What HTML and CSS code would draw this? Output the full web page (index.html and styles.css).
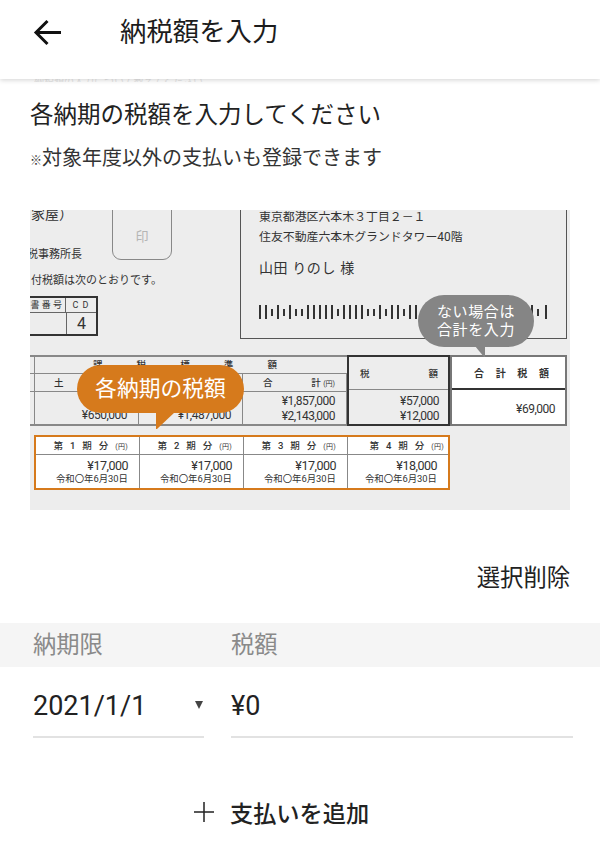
FILE: index.html

```html
<!DOCTYPE html>
<html lang="ja">
<head>
    <meta charset="UTF-8">
    <meta name="viewport" content="width=device-width, initial-scale=1.0">
    <title>納税額を入力</title>
    <link rel="stylesheet" href="styles.css">
</head>
<body>
    <header class="topbar">
        <svg class="back" width="30" height="30" viewBox="0 0 30 30">
            <path d="M29 14.5H4M15.5 3L4 14.5L15.5 26" fill="none" stroke="#111" stroke-width="3"/>
        </svg>
        <h1>納税額を入力</h1>
    </header>
    <div class="ghost"><span>納税額の入力について教えてください</span></div>

    <p class="lead">各納期の税額を入力してください</p>
    <p class="sub"><span class="mark">※</span>対象年度以外の支払いも登録できます</p>

    <div class="doc">
        <div class="small t-house">家屋）</div>
        <div class="seal">印</div>
        <div class="small t-office">税事務所長</div>
        <div class="small t-note">付税額は次のとおりです。</div>
        <div class="cd">
            <div class="cd-head">書 番 号</div>
            <div class="cd-head">C D</div>
            <div></div>
            <div class="cd-num">4</div>
        </div>

        <div class="address">
            <div class="addr-line">東京都港区六本木３丁目２－１</div>
            <div class="addr-line">住友不動産六本木グランドタワー40階</div>
            <div class="addr-name">山田 りのし 様</div>
            <svg class="barcode" width="292" height="14" viewBox="0 0 292 14">
                <path d="M1 0V14M7 0V14M13 4V11M19 0V14M25 4V11M31 0V14M37 4V11M43 4V11M49 0V14M55 0V14M61 0V14M67 0V14M73 0V14M79 4V11M85 0V14M91 0V14M97 0V14M103 0V14M109 4V11M115 4V11M121 0V14M127 4V11M133 0V14M139 0V14M145 4V11M151 0V14M157 0V14M163 4V11M169 0V14M175 4V11M181 0V14M187 0V14M193 0V14M199 4V11M205 0V14M211 4V11M217 0V14M223 0V14M229 4V11M235 0V14M241 0V14M247 4V11M253 0V14M259 0V14M265 4V11M273 0V14M279 4V11M287 0V14" fill="none" stroke="#333" stroke-width="2"/>
            </svg>
        </div>

        <div class="tax">
            <div class="tax-title"><span>課</span><span>税</span><span>標</span><span>準</span><span>額</span></div>
            <div class="tax-cell tax-land">土</div>
            <div class="tax-cell"></div>
            <div class="tax-cell tax-sum"><span>合</span><span>計 <small>(円)</small></span></div>
            <div class="tax-cell tax-val">¥650,000</div>
            <div class="tax-cell tax-val">¥1,487,000</div>
            <div class="tax-cell tax-val">¥1,857,000<br>¥2,143,000</div>
        </div>
        <div class="amount">
            <div class="amount-head"><span>税</span><span>額</span></div>
            <div class="amount-val">¥57,000<br>¥12,000</div>
        </div>
        <div class="total">
            <div class="total-head"><span>合</span><span>計</span><span>税</span><span>額</span></div>
            <div class="total-val">¥69,000</div>
        </div>

        <div class="terms">
            <div class="term">
                <div class="term-head">第 1 期 分 <small>(円)</small></div>
                <div class="term-body">¥17,000<small>令和〇年6月30日</small></div>
            </div>
            <div class="term">
                <div class="term-head">第 2 期 分 <small>(円)</small></div>
                <div class="term-body">¥17,000<small>令和〇年6月30日</small></div>
            </div>
            <div class="term">
                <div class="term-head">第 3 期 分 <small>(円)</small></div>
                <div class="term-body">¥17,000<small>令和〇年6月30日</small></div>
            </div>
            <div class="term term-last">
                <div class="term-head">第 4 期 分 <small>(円)</small></div>
                <div class="term-body">¥18,000<small>令和〇年6月30日</small></div>
            </div>
        </div>

        <div class="bubble bubble-orange">各納期の税額</div>
        <div class="bubble bubble-gray">ない場合は<br>合計を入力</div>
    </div>

    <div class="actions">選択削除</div>

    <div class="band">
        <div class="col-date">納期限</div>
        <div class="col-tax">税額</div>
    </div>
    <div class="row">
        <div class="field field-date">2021/1/1<span class="caret"></span></div>
        <div class="field field-tax">¥0</div>
    </div>

    <div class="add">
        <svg width="20" height="20" viewBox="0 0 20 20">
            <path d="M0 10H20M10 0V20" fill="none" stroke="#222" stroke-width="1.5"/>
        </svg>
        <span>支払いを追加</span>
    </div>
</body>
</html>
```

FILE: styles.css

```css
* {
    box-sizing: border-box;
}
body {
    margin: 0;
    background: white;
    color: #222;
    font-family: Roboto, "Noto Sans CJK JP", sans-serif;
    position: relative;
    height: 853px;
    overflow: hidden;
}
.topbar {
    height: 79px;
    display: flex;
    align-items: flex-start;
    padding: 18px 0 0 32px;
    background: white;
    box-shadow: 0 1px 5px rgba(0, 0, 0, 0.18);
    position: relative;
    z-index: 2;
}
.topbar h1 {
    margin: -2px 0 0 58px;
    font-size: 26.4px;
    line-height: 32px;
    font-weight: 400;
    color: #1c1c1c;
}
.ghost {
    position: absolute;
    top: 79px;
    left: 34px;
    height: 3px;
    overflow: hidden;
    font-size: 10px;
    line-height: 6px;
    color: #e6e6e6;
}
.lead {
    margin: 18px 0 0 30px;
    font-size: 23.5px;
    line-height: 36px;
}
.sub {
    margin: 7px 0 0 30px;
    font-size: 20px;
    line-height: 36px;
    color: #333;
}
.sub .mark {
    font-size: 12px;
    line-height: 0;
}

/* 納付書の図 */
.doc {
    position: relative;
    margin: 34px 30px 0;
    height: 300px;
    background: #ededed;
    overflow: hidden;
    color: #333;
}
.small {
    position: absolute;
    font-size: 11px;
    line-height: 14px;
    white-space: nowrap;
}
.t-house {
    left: 1px;
    top: -3px;
    font-size: 14px;
}
.t-office {
    left: -3px;
    top: 38px;
}
.t-note {
    left: 1px;
    top: 64px;
}
.seal {
    position: absolute;
    left: 82px;
    top: -10px;
    width: 60px;
    height: 60px;
    border: 1.5px solid #888;
    border-radius: 9px;
    color: #b5b5b5;
    font-size: 13px;
    display: flex;
    align-items: center;
    justify-content: center;
    padding-top: 10px;
}
.cd {
    position: absolute;
    left: -2px;
    top: 86px;
    width: 70px;
    height: 40px;
    border: 2px solid #333;
    display: grid;
    grid-template-columns: 36px 1fr;
    grid-template-rows: 15px 1fr;
    background: #ededed;
}
.cd-head {
    font-size: 9px;
    line-height: 15px;
    text-align: center;
    border-bottom: 1px solid #666;
    white-space: nowrap;
    letter-spacing: 1px;
}
.cd-head:first-child {
    border-right: 1px solid #666;
    overflow: hidden;
    text-align: right;
    padding-right: 3px;
    letter-spacing: 0;
}
.cd-num {
    border-left: 1px solid #666;
    font-size: 16px;
    line-height: 21px;
    text-align: center;
}
.address {
    position: absolute;
    left: 210px;
    top: -12px;
    width: 327px;
    height: 141px;
    border: 1.5px solid #555;
    padding: 8px 0 0 18px;
}
.addr-line {
    font-size: 11.9px;
    line-height: 20px;
    white-space: nowrap;
}
.addr-name {
    margin-top: 11px;
    font-size: 14px;
    line-height: 20px;
    letter-spacing: 0.6px;
}
.barcode {
    display: block;
    margin-top: 27px;
}

/* 税額の表 */
.tax {
    position: absolute;
    left: 0;
    top: 145px;
    width: 317px;
    height: 71px;
    border-top: 2px solid #888;
    border-bottom: 2px solid #888;
    display: grid;
    grid-template-columns: 109px 104px 104px;
    grid-template-rows: 16px 18px 1fr;
}
.tax::before {
    content: "";
    position: absolute;
    left: 4px;
    top: 0;
    bottom: 0;
    border-left: 1px solid #888;
}
.tax-title {
    grid-column: 1 / 4;
    padding: 0 70px 0 63px;
    display: flex;
    justify-content: space-between;
    font-size: 9.5px;
    line-height: 16px;
    font-weight: 500;
}
.tax-cell {
    border-top: 1.5px solid #888;
    border-right: 1px solid #888;
}
.tax-land {
    font-size: 9.5px;
    line-height: 17px;
    padding-left: 24px;
    font-weight: 500;
}
.tax-sum {
    display: flex;
    justify-content: space-between;
    font-size: 9.5px;
    line-height: 17px;
    padding: 0 11px 0 20px;
    font-weight: 500;
}
.tax-sum small,
.term-head small {
    font-size: 7px;
    font-weight: 400;
}
.tax-val {
    font-size: 12px;
    letter-spacing: -0.5px;
    line-height: 15px;
    text-align: right;
    padding: 2px 11px 0 0;
}
.tax-val:not(:last-child) {
    padding-top: 16px;
}
.amount {
    position: absolute;
    left: 317px;
    top: 145px;
    width: 103px;
    height: 71px;
    border: 2px solid #333;
    display: flex;
    flex-direction: column;
}
.amount-head {
    height: 33px;
    display: flex;
    justify-content: space-between;
    align-items: center;
    padding: 0 10px 0 11px;
    font-size: 9.5px;
    font-weight: 500;
    border-bottom: 1.5px solid #888;
}
.amount-val {
    font-size: 12px;
    letter-spacing: -0.5px;
    line-height: 15px;
    text-align: right;
    padding: 4px 9px 0 0;
}
.total {
    position: absolute;
    left: 420px;
    top: 145px;
    width: 117px;
    height: 71px;
    background: white;
    border: 2px solid #777;
}
.total-head {
    height: 33px;
    display: flex;
    justify-content: space-between;
    align-items: center;
    padding: 0 16px 0 22px;
    font-size: 10px;
    font-weight: 700;
    border-bottom: 2px solid #333;
}
.total-val {
    font-size: 12px;
    letter-spacing: -0.5px;
    line-height: 38px;
    text-align: right;
    padding-right: 10px;
}

/* 各期の表 */
.terms {
    position: absolute;
    left: 4px;
    top: 225px;
    width: 416px;
    height: 55px;
    background: white;
    border: 2px solid #d67a1c;
    display: grid;
    grid-template-columns: 104px 104px 104px 1fr;
}
.term {
    border-right: 1px solid #888;
    text-align: right;
}
.term-last {
    border-right: none;
}
.term-head {
    height: 18px;
    border-bottom: 1px solid #888;
    padding-right: 11px;
    font-size: 9.5px;
    line-height: 17px;
    font-weight: 500;
    white-space: nowrap;
    word-spacing: 4px;
    letter-spacing: 0.3px;
}
.term-last .term-head {
    padding-right: 4px;
}
.term-body {
    padding: 3px 11px 0 0;
    font-size: 12.5px;
    letter-spacing: -0.5px;
    line-height: 15px;
}
.term-body small {
    display: block;
    font-size: 9.4px;
    letter-spacing: 0;
    line-height: 12px;
    white-space: nowrap;
}

/* 吹き出し */
.bubble {
    position: absolute;
    color: white;
    text-align: center;
    display: flex;
    align-items: center;
    justify-content: center;
}
.bubble::after {
    content: "";
    position: absolute;
    top: 100%;
    margin-top: -1px;
}
.bubble-orange {
    left: 47px;
    top: 155px;
    width: 167px;
    height: 48px;
    border-radius: 24px;
    background: #d67a1c;
    font-size: 21.8px;
    line-height: 30px;
}
.bubble-orange::after {
    left: 79px;
    border-top: 17px solid #d67a1c;
    border-left: 1px solid #d67a1c;
    border-right: 18px solid transparent;
}
.bubble-gray {
    left: 388px;
    top: 85px;
    width: 116px;
    height: 52px;
    border-radius: 26px;
    background: #858585;
    font-size: 15px;
    line-height: 18px;
    letter-spacing: 0.6px;
}
.bubble-gray::after {
    left: 57px;
    border-top: 11px solid #858585;
    border-left: 9px solid transparent;
    border-right: 1px solid #858585;
}

/* 入力欄 */
.actions {
    margin-top: 50px;
    padding-right: 30px;
    text-align: right;
    font-size: 23.3px;
    line-height: 36px;
}
.band {
    margin-top: 27px;
    height: 44px;
    padding-bottom: 4px;
    background: #f5f5f5;
    display: flex;
    align-items: center;
    font-size: 23.3px;
    color: #8a8a8a;
}
.col-date {
    margin-left: 33px;
    width: 198px;
}
.row {
    display: flex;
    padding: 0 27px 0 33px;
    gap: 27px;
}
.field {
    height: 71px;
    border-bottom: 2px solid #e2e2e2;
    font-size: 27px;
    line-height: 78px;
    color: #222;
}
.field-date {
    width: 171px;
    position: relative;
}
.field-tax {
    flex: 1;
}
.caret {
    position: absolute;
    right: 1px;
    top: 34px;
    border-top: 8px solid #444;
    border-left: 4px solid transparent;
    border-right: 4px solid transparent;
}
.add {
    margin-top: 54px;
    padding-left: 194px;
    height: 40px;
    display: flex;
    align-items: center;
    gap: 16px;
    font-size: 23.2px;
    font-weight: 500;
}
```
